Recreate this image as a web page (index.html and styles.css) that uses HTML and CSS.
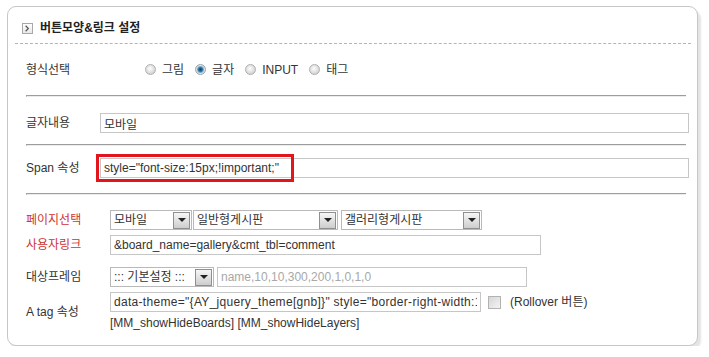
FILE: index.html
```html
<!DOCTYPE html>
<html lang="ko">
<head>
  <meta charset="UTF-8">
  <title>버튼모양&amp;링크 설정</title>
  <link rel="stylesheet" href="styles.css">
</head>
<body>
  <div class="box">
    <!-- 제목 -->
    <div class="box-head">
      <span class="ico">
        <svg width="11" height="11" viewBox="0 0 11 11"><path d="M4 2.5 L7 5.5 L4 8.5" fill="none" stroke="#555" stroke-width="1.3"/></svg>
      </span>
      <h2>버튼모양&amp;링크 설정</h2>
    </div>

    <div class="box-body">
      <!-- 형식선택 -->
      <div class="row row-type">
        <span class="lbl lbl-wide">형식선택</span>
        <label class="opt"><input type="radio" name="kind">그림</label>
        <label class="opt"><input type="radio" name="kind" checked>글자</label>
        <label class="opt"><input type="radio" name="kind">INPUT</label>
        <label class="opt"><input type="radio" name="kind">태그</label>
      </div>
      <hr class="sep">

      <div class="row row-text">
        <span class="lbl lbl-mid">글자내용</span>
        <input type="text" class="txt txt-full" value="모바일">
      </div>
      <hr class="sep">

      <div class="row row-span">
        <span class="lbl lbl-mid">Span 속성</span>
        <div class="mark">
          <input type="text" class="txt txt-full" value="style=&quot;font-size:15px;!important;&quot;">
          <span class="mark-box"></span>
        </div>
      </div>
      <hr class="sep">

      <div class="links">
        <div class="row">
          <span class="lbl lbl-link red">페이지선택</span>
          <div class="sel sel-page"><span class="sel-val">모바일</span><span class="sel-btn"><i></i></span></div>
          <div class="sel sel-board"><span class="sel-val">일반형게시판</span><span class="sel-btn"><i></i></span></div>
          <div class="sel sel-gallery"><span class="sel-val">갤러리형게시판</span><span class="sel-btn"><i></i></span></div>
        </div>
        <div class="row row-gap-s">
          <span class="lbl lbl-link red">사용자링크</span>
          <input type="text" class="txt txt-link" value="&amp;board_name=gallery&amp;cmt_tbl=comment">
        </div>
        <div class="row row-gap-l">
          <span class="lbl lbl-link">대상프레임</span>
          <div class="sel sel-frame"><span class="sel-val">::: 기본설정 :::</span><span class="sel-btn"><i></i></span></div>
          <input type="text" class="txt txt-frame" placeholder="name,10,10,300,200,1,0,1,0">
        </div>
        <div class="row row-gap-s">
          <span class="lbl lbl-link">A tag 속성</span>
          <div class="atag">
            <div class="atag-line">
              <input type="text" class="txt txt-atag" value="data-theme=&quot;{AY_jquery_theme[gnb]}&quot; style=&quot;border-right-width:1px&quot;">
              <label class="chk"><input type="checkbox">(Rollover 버튼)</label>
            </div>
            <div class="note">[MM_showHideBoards] [MM_showHideLayers]</div>
          </div>
        </div>
      </div>
    </div>
  </div>
</body>
</html>
```

FILE: styles.css
```css
body {
  margin: 0;
  padding: 6px 0 0 7px;
  background: #fff;
  font-family: "Liberation Sans", "Noto Sans CJK KR", sans-serif;
  font-size: 12px;
  color: #333;
}
.box {
  width: 691px;
  height: 340px;
  box-sizing: border-box;
  border: 1px solid #c6c6c6;
  border-radius: 9px;
  box-shadow: 3px 4px 2px #e4e4e4;
  background: #fff;
}
.box-head {
  display: flex;
  align-items: center;
  height: 12px;
  margin: 0 6px 0 7px;
  padding: 15px 0 9px 7px;
  border-bottom: 1px dashed #b4b4b4;
}
.ico {
  width: 11px;
  height: 11px;
  box-sizing: border-box;
  border: 1px solid #a8a8a8;
  background: linear-gradient(#ffffff, #e8e8e8);
  display: flex;
  margin-right: 7px;
}
.ico svg {
  margin: -1px 0 0 -1px;
}
.box-head h2 {
  margin: 0;
  font-size: 12px;
  line-height: 12px;
  font-weight: bold;
  color: #222;
}
.box-body {
  padding: 0 0 0 18px;
}
.row {
  display: flex;
  align-items: center;
}
.lbl {
  flex: none;
  line-height: 16px;
}
.lbl-wide { width: 119px; }
.lbl-mid { width: 74px; }
.lbl-link { width: 84px; }
.red { color: #cc3333; }

.row-type {
  height: 51px;
}
.opt {
  display: flex;
  align-items: center;
  margin-right: 11px;
  line-height: 16px;
}
.opt input {
  appearance: none;
  -webkit-appearance: none;
  width: 11px;
  height: 11px;
  margin: 0 6px 0 0;
  border: 1px solid #b0b0b0;
  border-radius: 50%;
  background: radial-gradient(circle at 45% 40%, #ffffff 0, #e6e6e6 40%, #c4c4c4 100%);
}
.opt input:checked {
  border-color: #9aa4ab;
  background: radial-gradient(circle, #0c3c60 0, #2a74a6 2px, #8ab8d4 3.2px, #e2e2e2 4px, #c9c9c9 100%);
}

.sep {
  width: 659px;
  height: 0;
  margin: 0;
  border: 0;
  border-top: 1px solid #9d9d9d;
  border-left: 1px solid #9d9d9d;
  border-bottom: 1px solid #ececec;
}
.row-text {
  padding: 16px 0 11px;
}
.row-span {
  padding: 12px 0 15px;
}
.txt {
  height: 20px;
  box-sizing: border-box;
  margin: 0;
  padding: 0 3px;
  border: 1px solid #c6c6c6;
  font-family: "Liberation Sans", "Noto Sans CJK KR", sans-serif;
  font-size: 12px;
  color: #333;
  background: #fff;
  outline: none;
}
.txt::placeholder {
  color: #a8a8a8;
}
.txt-full { width: 589px; }
.mark {
  position: relative;
  display: flex;
}
.mark-box {
  position: absolute;
  left: -4px;
  top: -4px;
  width: 198px;
  height: 28px;
  box-sizing: border-box;
  border: 3px solid #e2141c;
}

.links {
  padding-top: 15px;
}
.row-gap-s { margin-top: 5px; }
.row-gap-l { margin-top: 12px; }

.sel {
  display: flex;
  align-items: center;
  height: 20px;
  box-sizing: border-box;
  padding: 0 1px 0 3px;
  border: 1px solid #b9b9b9;
  background: #fff;
  line-height: 16px;
}
.sel-val {
  flex: 1;
  white-space: nowrap;
}
.sel-btn {
  width: 17px;
  height: 17px;
  box-sizing: border-box;
  border: 1px solid #8f8f8f;
  background: linear-gradient(#f6f6f6, #cdcdcd);
  display: flex;
  align-items: center;
  justify-content: center;
}
.sel-btn i {
  width: 0;
  height: 0;
  border-left: 4px solid transparent;
  border-right: 4px solid transparent;
  border-top: 4px solid #222;
}
.sel-page { width: 82px; margin-right: 1px; }
.sel-board { width: 145px; margin-right: 3px; }
.sel-gallery { width: 141px; }
.sel-frame { width: 104px; margin-right: 3px; }
.txt-link { width: 431px; }
.txt-frame { width: 310px; }
.txt-atag { width: 371px; letter-spacing: 0.3px; }

.atag-line {
  display: flex;
  align-items: center;
}
.chk {
  display: flex;
  align-items: center;
  margin-left: 7px;
  line-height: 16px;
}
.chk input {
  appearance: none;
  -webkit-appearance: none;
  width: 13px;
  height: 13px;
  margin: 0 9px 0 0;
  border: 1px solid #b2b2b2;
  background: linear-gradient(135deg, #d6d6d6, #f4f4f4);
}
.note {
  margin-top: 3px;
  line-height: 16px;
}
```
